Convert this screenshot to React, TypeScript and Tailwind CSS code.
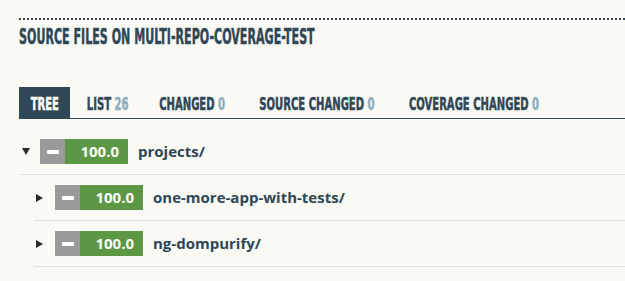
import { ReactNode } from "react";

const condensed =
  "font-['Liberation_Sans_Narrow','DejaVu_Sans_Condensed',sans-serif] font-bold [-webkit-text-stroke:0.5px_currentColor]";

interface TabItem {
  label: string;
  count?: number;
  width: string;
  active?: boolean;
}

const tabs: TabItem[] = [
  { label: "TREE", width: "w-[51px]", active: true },
  { label: "LIST", count: 26, width: "w-[66px]" },
  { label: "CHANGED", count: 0, width: "w-[93px]" },
  { label: "SOURCE CHANGED", count: 0, width: "w-[145px]" },
  { label: "COVERAGE CHANGED", count: 0, width: "w-[160px]" },
];

function Triangle({ open }: { open: boolean }) {
  return open ? (
    <svg width="8" height="7" viewBox="0 0 8 7" className="text-[#2b2b2b]">
      <polygon points="0,0 8,0 4,7" fill="currentColor" />
    </svg>
  ) : (
    <svg width="7" height="8" viewBox="0 0 7 8" className="text-[#2b2b2b]">
      <polygon points="0,0 7,4 0,8" fill="currentColor" />
    </svg>
  );
}

function CoverageBadge({ value }: { value: string }) {
  return (
    <div className="flex h-[25px] shrink-0">
      <div className="flex w-[25px] items-center justify-center bg-[#9a9a9a]">
        <div className="h-[4px] w-[12px] rounded-[1px] bg-white" />
      </div>
      <div className="flex w-[63px] items-center justify-end bg-[#5b9745] pr-[9px] font-['Open_Sans',sans-serif] text-[15px] font-bold text-white">
        {value}
      </div>
    </div>
  );
}

function TreeRow({ name, open, children }: { name: string; open: boolean; children?: ReactNode }) {
  return (
    <li>
      <div className="flex h-[46px] items-center border-b border-[#e2dfd8]">
        <div className={`flex w-[21px] items-center ${open ? "pl-[3px]" : "pl-[2px]"}`}>
          <Triangle open={open} />
        </div>
        <CoverageBadge value="100.0" />
        <span className="ml-[10px] font-['Open_Sans',sans-serif] text-[15px] font-bold text-[#2d4656]">
          {name}
        </span>
      </div>
      {children && <ul className="ml-[15px]">{children}</ul>}
    </li>
  );
}

export default function App() {
  return (
    <div className="h-[281px] w-full overflow-hidden bg-[#fbfaf5] pl-[19px] pt-[18px]">
      <div className="border-t-2 border-dotted border-[#2f4756]" />
      <h1
        className={`${condensed} mt-[6px] inline-block origin-left scale-x-[0.56] whitespace-nowrap text-[22px] leading-none text-[#2f4756]`}
      >
        SOURCE FILES ON MULTI-REPO-COVERAGE-TEST
      </h1>

      <div className="mt-[37px] flex h-[32px] gap-[5px] border-b border-[#2f4756]">
        {tabs.map((tab) => (
          <div
            key={tab.label}
            className={`flex ${tab.width} shrink-0 items-center justify-center ${
              tab.active ? "bg-[#2f4756] text-white" : "text-[#2f4756]"
            }`}
          >
            <span
              className={`${condensed} inline-block scale-x-[0.62] whitespace-nowrap pt-[2px] text-[18px] leading-none`}
            >
              {tab.label}
              {tab.count !== undefined && <span className="text-[#8eadc0]"> {tab.count}</span>}
            </span>
          </div>
        ))}
      </div>

      <ul className="mt-[10px]">
        <TreeRow name="projects/" open>
          <TreeRow name="one-more-app-with-tests/" open={false} />
          <TreeRow name="ng-dompurify/" open={false} />
        </TreeRow>
      </ul>
    </div>
  );
}
